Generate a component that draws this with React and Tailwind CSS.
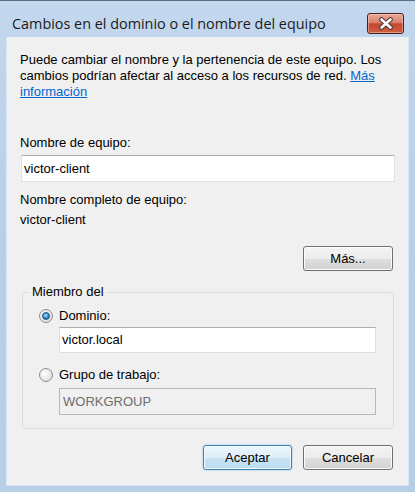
import React from 'react';

const font = { fontFamily: '"Liberation Sans", Arial, sans-serif' };

const Radio = ({ checked }) => (
    <span className="relative w-[14px] h-[14px] rounded-full border border-[#8e8f8f] bg-[radial-gradient(circle_at_40%_40%,#ffffff_0%,#e8e8e8_55%,#c9c9c9_100%)] flex items-center justify-center shrink-0">
        {checked && (
            <span className="w-[8px] h-[8px] rounded-full bg-[radial-gradient(circle_at_45%_40%,#b9e4ff_0%,#3d95d8_45%,#16508a_100%)] border border-[#1e4f7a]"></span>
        )}
    </span>
);

const WinButton = ({ children, primary, className = '' }) => (
    <button
        className={
            primary
                ? `h-[25px] rounded-[3px] border border-[#3c7fb1] bg-[linear-gradient(#eef7fd_0%,#dcedf8_50%,#c9e4f5_51%,#b9dcf2_100%)] shadow-[inset_0_0_0_1px_#f4fbff,0_0_2px_#6fc6f2] text-[13px] text-black ${className}`
                : `h-[25px] rounded-[3px] border border-[#707070] bg-[linear-gradient(#f4f4f4_0%,#ececec_50%,#dedede_51%,#d3d3d3_100%)] shadow-[inset_0_0_0_1px_#fbfbfb] text-[13px] text-black ${className}`
        }
        style={font}
    >
        {children}
    </button>
);

const TextBox = ({ value, disabled, className = '' }) => (
    <div
        className={
            disabled
                ? `flex items-center border border-[#b5b8bc] bg-[#f0f0f0] pl-[3px] text-[13px] text-[#6d6d6d] ${className}`
                : `flex items-center border border-[#dbdfe6] border-t-[#abadb3] bg-white pl-[2px] text-[13px] text-black ${className}`
        }
    >
        {value}
    </div>
);

const App = () => {
    return (
        <div className="w-[415px] h-[492px] flex flex-col border-t border-[#5f6b78] bg-[linear-gradient(#c3d7ee_0%,#bad0e9_40%,#b7cee7_100%)] overflow-hidden">
            {/* title bar */}
            <div className="h-[36px] flex items-end justify-between pl-[12px] pr-[11px] pb-[3px]">
                <span className="leading-[20px] text-[14.4px] text-[#1b1b1b]" style={{ fontFamily: '"Open Sans", "Noto Sans", sans-serif' }}>
                    Cambios en el dominio o el nombre del equipo
                </span>
                <div className="w-[37px] h-[21px] rounded-[3px] border border-[#4a1f1c] bg-[linear-gradient(#e9a99a_0%,#d9806c_45%,#c4472f_52%,#cf5f44_100%)] shadow-[inset_0_0_0_1px_rgba(255,220,210,0.45)] flex items-center justify-center">
                    <svg width="16" height="13" viewBox="0 0 16 13">
                        <path d="M3.5 2.5 L12.5 10.5 M12.5 2.5 L3.5 10.5" stroke="#4d3633" strokeWidth="4.6" strokeLinecap="round" />
                        <path d="M3.5 2.5 L12.5 10.5 M12.5 2.5 L3.5 10.5" stroke="#ffffff" strokeWidth="2.6" strokeLinecap="round" />
                    </svg>
                </div>
            </div>

            {/* client area */}
            <div className="flex-1 mx-[6px] border-x border-b border-[#dce7f4] bg-[#f0f0f0] pt-[15px] pl-[13px] pr-[13px] text-[13px] text-black" style={font}>
                <p className="leading-[16px]">
                    Puede cambiar el nombre y la pertenencia de este equipo. Los
                    <br />
                    cambios podrían afectar al acceso a los recursos de red.{' '}
                    <a className="text-[#0066cc] underline">
                        Más
                        <br />
                        información
                    </a>
                </p>

                <div className="mt-[35px] leading-[16px]">Nombre de equipo:</div>
                <TextBox value="victor-client" className="mt-[4px] ml-[1px] w-[374px] h-[27px]" />

                <div className="mt-[10px] leading-[16px]">Nombre completo de equipo:</div>
                <div className="mt-[4px] leading-[16px]">victor-client</div>

                <div className="mt-[18px] flex justify-end pr-[2px]">
                    <WinButton className="w-[90px]">Más...</WinButton>
                </div>

                <fieldset className="mt-[13px] ml-[2px] w-[372px] border border-[#d5dfe5] rounded-[3px] pb-[13px]">
                    <legend className="ml-[7px] px-[2px] leading-[16px]">Miembro del</legend>

                    <div className="mt-[8px] pl-[16px] flex items-center gap-[6px] leading-[16px]">
                        <Radio checked />
                        <span>Dominio:</span>
                    </div>
                    <TextBox value="victor.local" className="mt-[3px] ml-[36px] w-[317px] h-[26px]" />

                    <div className="mt-[14px] pl-[16px] flex items-center gap-[6px] leading-[16px]">
                        <Radio />
                        <span>Grupo de trabajo:</span>
                    </div>
                    <TextBox value="WORKGROUP" disabled className="mt-[5px] ml-[36px] w-[317px] h-[27px]" />
                </fieldset>

                <div className="mt-[16px] flex justify-end gap-[11px] pr-[2px]">
                    <WinButton primary className="w-[89px]">Aceptar</WinButton>
                    <WinButton className="w-[90px]">Cancelar</WinButton>
                </div>
            </div>

            <div className="h-[6px]"></div>
        </div>
    );
};

export default App;
